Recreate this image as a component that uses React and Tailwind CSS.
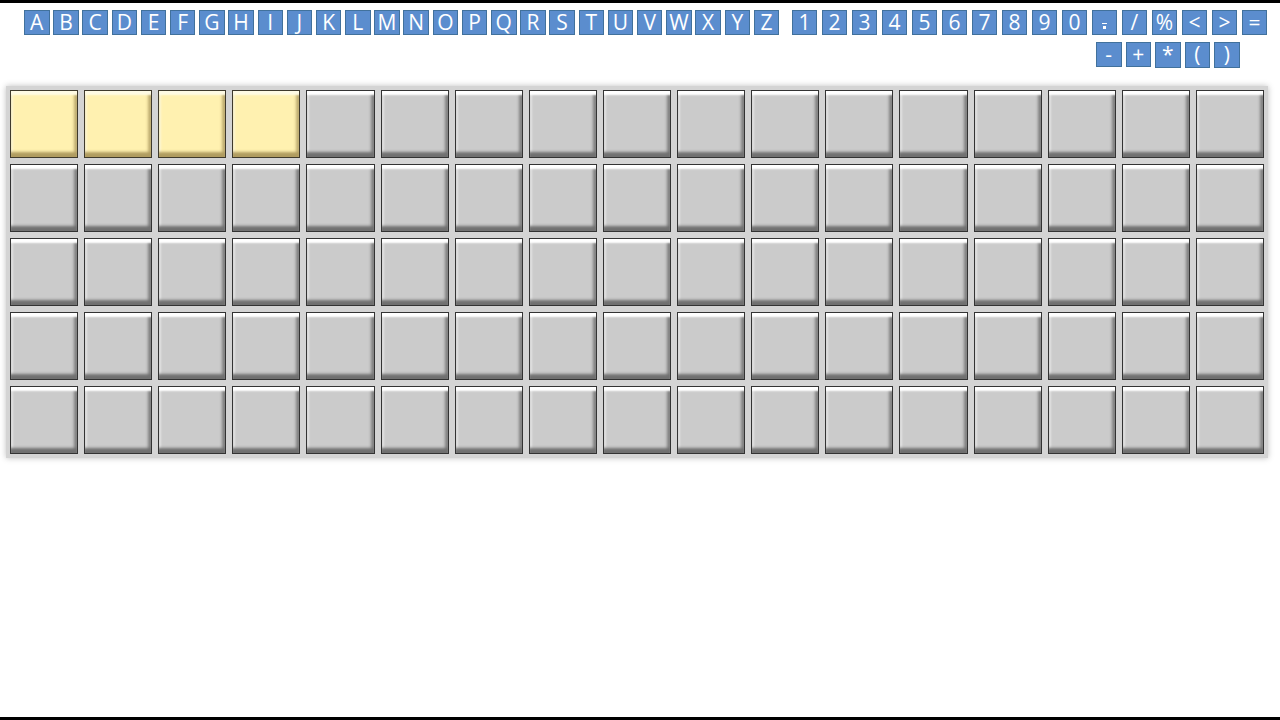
import React from "react";

const letters = "ABCDEFGHIJKLMNOPQRSTUVWXYZ".split("");
const digits = ["1", "2", "3", "4", "5", "6", "7", "8", "9", "0", ".", "/", "%", "<", ">", "="];
const row2 = ["-", "+", "*", "(", ")"];

function Key({ ch, tall }) {
  return (
    <div
      className={`flex items-center justify-center w-[25.5px] ${tall ? "h-[26px]" : "h-[25px]"} bg-[#5b8dce] border border-[#41719c] text-white text-[21px] leading-none`}
      style={{ fontFamily: '"Open Sans", "Noto Sans", sans-serif' }}
    >
      {ch === "." ? (
        <span className="flex flex-col items-center leading-none">
          <span className="block w-[5px] h-[1.5px] bg-white mb-[2px] mt-[6px]"></span>
          <span className="block w-[2.5px] h-[2.5px] bg-white"></span>
        </span>
      ) : (
        <span className="-mt-[1px]">{ch}</span>
      )}
    </div>
  );
}

function Tile({ yellow }) {
  return yellow ? (
    <div className="h-[68px] bg-[#fff1b0] border-[1.5px] border-[#3f3a2c] shadow-[inset_0_5px_2px_-1px_#fffbe4,inset_0_-6px_3px_-1px_#b09c60,inset_3px_0_2px_-1px_#fff8d8,inset_-4px_0_3px_-1px_#c0ad72]"></div>
  ) : (
    <div className="h-[68px] bg-[#cbcbcb] border-[1.5px] border-[#333333] shadow-[inset_0_5px_2px_-1px_#ffffff,inset_0_-6px_3px_-1px_#707070,inset_3px_0_2px_-1px_#e8e8e8,inset_-4px_0_3px_-1px_#808080]"></div>
  );
}

export default function App() {
  const tiles = [];
  for (let r = 0; r < 5; r++) {
    for (let c = 0; c < 17; c++) {
      tiles.push(<Tile key={`${r}-${c}`} yellow={r === 0 && c < 4} />);
    }
  }
  return (
    <div className="w-[1280px] h-[720px] bg-white flex flex-col overflow-hidden">
      <div className="h-[3px] bg-black shrink-0"></div>
      <div className="flex-1 flex flex-col">
        <div className="flex items-start mt-[7px] pl-[24px]">
          <div className="flex gap-[3.7px]">
            {letters.map((l) => (
              <Key key={l} ch={l} />
            ))}
          </div>
          <div className="flex gap-[4.5px] ml-[12.5px]">
            {digits.map((d) => (
              <Key key={d} ch={d} />
            ))}
          </div>
        </div>
        <div className="flex items-start gap-[4px] mt-[7px] pl-[1096px]">
          {row2.map((d, i) => (
            <Key key={d} ch={d} tall={i >= 2} />
          ))}
        </div>
        <div className="ml-[6px] mt-[18px] w-[1262px] bg-[#d4d4d4] px-[4px] py-[4px] shadow-[0_0_6px_rgba(0,0,0,0.25)]">
          <div className="grid gap-[6px]" style={{ gridTemplateColumns: "repeat(17, minmax(0, 1fr))" }}>
            {tiles}
          </div>
        </div>
      </div>
      <div className="h-[3px] bg-black shrink-0"></div>
    </div>
  );
}
